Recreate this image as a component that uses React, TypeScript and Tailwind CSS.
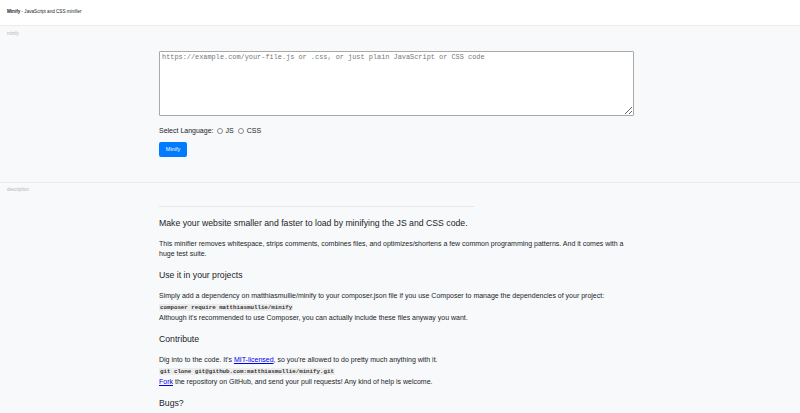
import React from "react";

const Label: React.FC<{ text: string }> = ({ text }) => (
  <div className="text-[4.5px] leading-[6px] text-[#b5b5b5]">{text}</div>
);

const Heading: React.FC<{ children: React.ReactNode }> = ({ children }) => (
  <h4 className="text-[8.7px] leading-[12px] text-[#212529] mb-[10px]">{children}</h4>
);

const Para: React.FC<{ children: React.ReactNode }> = ({ children }) => (
  <p className="text-[7px] leading-[10.5px] text-[#212529] mb-[9.5px]">{children}</p>
);

const Code: React.FC<{ children: React.ReactNode }> = ({ children }) => (
  <code className="font-['Liberation_Mono',monospace] text-[5.8px] font-semibold text-[#333] bg-[#ececec] px-[1px]">
    {children}
  </code>
);

const App: React.FC = () => {
  return (
    <div className="min-h-screen bg-[#f8f9fa] font-['Liberation_Sans',Arial,sans-serif] text-[#212529]">
      {/* header */}
      <header className="h-[26px] bg-white border-b border-[#ececec] flex items-center px-[7px]">
        <span className="text-[4.6px] leading-none pb-[1px]">
          <b>Minify</b> - JavaScript and CSS minifier
        </span>
      </header>

      {/* minify */}
      <section className="px-[7px] pt-[5px] h-[157px] border-b border-[#ececec]">
        <Label text="minify" />
        <div className="ml-[152px] w-[475px] pt-[14px]">
          <textarea
            className="block w-full h-[65px] bg-white border border-[#a9a9a9] rounded-[1px] px-[2px] py-[1px] font-['Liberation_Mono',monospace] text-[6.9px] leading-[8px] text-[#212529] placeholder:text-[#777] resize-y outline-none"
            placeholder="https://example.com/your-file.js or .css, or just plain JavaScript or CSS code"
          />
          <div className="flex items-center mt-[10px] text-[7px] leading-[10px]">
            <span>Select Language:</span>
            <span className="ml-[3px] w-[6px] h-[6px] rounded-full border border-[#8a8a8a] bg-white" />
            <span className="ml-[3px]">JS</span>
            <span className="ml-[4px] w-[6px] h-[6px] rounded-full border border-[#8a8a8a] bg-white" />
            <span className="ml-[3px]">CSS</span>
          </div>
          <button className="mt-[6px] w-[28px] h-[15px] rounded-[2px] bg-[#007bff] text-white text-[5.5px] leading-none flex items-center justify-center">
            Minify
          </button>
        </div>
      </section>

      {/* description */}
      <section className="px-[7px] pt-[4px] pb-[40px]">
        <Label text="description" />
        <div className="ml-[152px] w-[475px] pt-[13px]">
          <hr className="w-[315px] border-t border-[#e6e6e6] mb-[9.5px]" />
          <Heading>Make your website smaller and faster to load by minifying the JS and CSS code.</Heading>
          <Para>
            This minifier removes whitespace, strips comments, combines files, and optimizes/shortens a few
            common programming patterns. And it comes with a huge test suite.
          </Para>
          <Heading>Use it in your projects</Heading>
          <Para>
            Simply add a dependency on matthiasmullie/minify to your composer.json file if you use Composer to
            manage the dependencies of your project:
            <br />
            <Code>composer require matthiasmullie/minify</Code>
            <br />
            Although it's recommended to use Composer, you can actually include these files anyway you want.
          </Para>
          <Heading>Contribute</Heading>
          <Para>
            Dig into to the code. It's{" "}
            <a href="#" className="text-[#0000ee] underline">MIT-licensed</a>, so you're allowed to do pretty
            much anything with it.
            <br />
            <Code>git clone git@github.com:matthiasmullie/minify.git</Code>
            <br />
            <a href="#" className="text-[#0000ee] underline">Fork</a> the repository on GitHub, and send your
            pull requests! Any kind of help is welcome.
          </Para>
          <Heading>Bugs?</Heading>
          <Para>
            Found a bug or have a feature request? Please open an issue on GitHub and describe what went wrong,
            with the smallest piece of code that reproduces it.
          </Para>
          <Heading>License</Heading>
          <Para>
            Minify is released under the MIT License. Feel free to use it in both personal and commercial projects.
          </Para>
        </div>
      </section>
    </div>
  );
};

export default App;
